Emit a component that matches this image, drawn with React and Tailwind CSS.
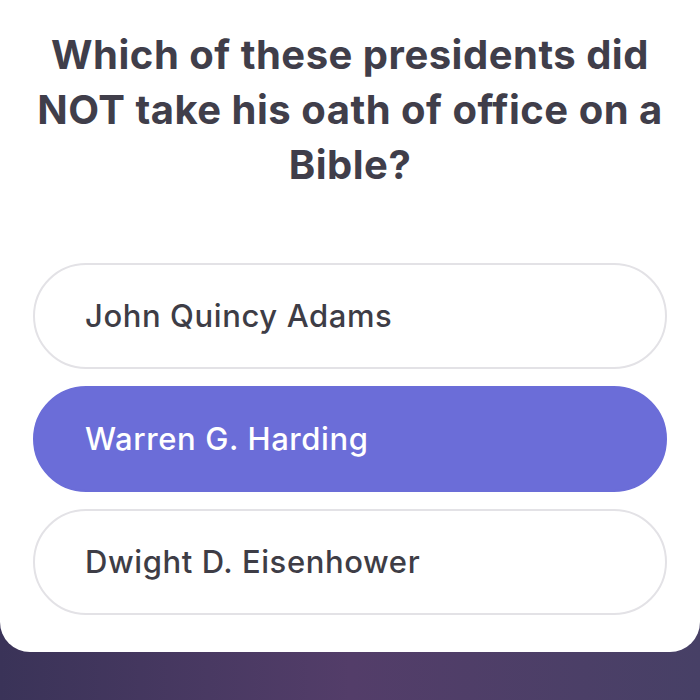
const OPTIONS = [
  { label: "John Quincy Adams", picked: false },
  { label: "Warren G. Harding", picked: true },
  { label: "Dwight D. Eisenhower", picked: false },
];

export default function App() {
  return (
    <div
      className="w-[700px] h-[700px] overflow-hidden bg-gradient-to-r from-[#3a3358] via-[#533d69] to-[#474066]"
      style={{ fontFamily: "Inter, 'Noto Sans', sans-serif" }}
    >
      <div className="bg-white rounded-b-[30px] h-[652px] px-[28px] pt-[27px]">
        {/* question */}
        <h1 className="text-center font-bold text-[40px] leading-[55px] text-[#403e4a] tracking-[0.5px]">
          Which of these presidents did NOT take his oath of office on a Bible?
        </h1>

        {/* answers */}
        <div className="mt-[71px] px-[5px] flex flex-col gap-[17px]">
          {OPTIONS.map((o) => (
            <div
              key={o.label}
              className={
                o.picked
                  ? "h-[106px] rounded-full bg-[#6b6dd8] border-2 border-[#6b6dd8] flex items-center pl-[50px] text-white"
                  : "h-[106px] rounded-full bg-white border-2 border-[#e3e2e6] flex items-center pl-[50px] text-[#3e3d46]"
              }
            >
              <span className="text-[31px] font-medium tracking-[0.6px]">{o.label}</span>
            </div>
          ))}
        </div>
      </div>
    </div>
  );
}
